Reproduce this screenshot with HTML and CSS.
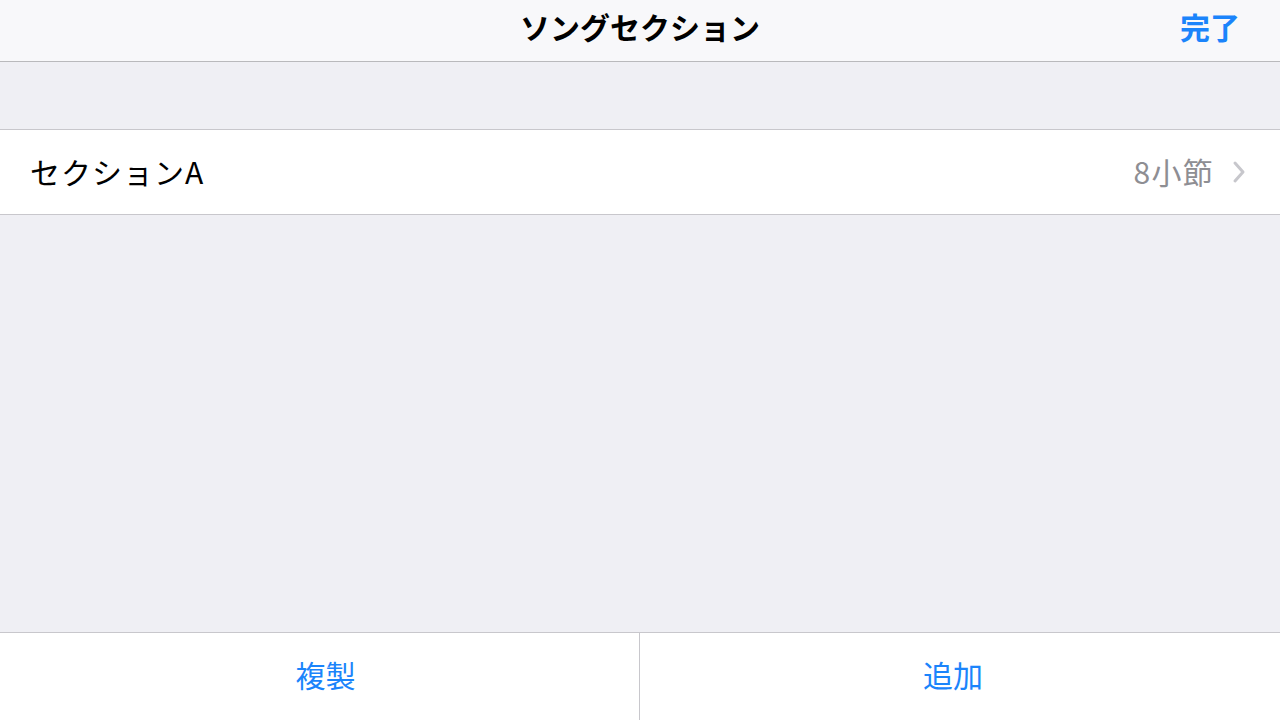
FILE: index.html
```html
<!DOCTYPE html>
<html lang="ja">
<head>
<meta charset="utf-8">
<title>ソングセクション</title>
<link rel="stylesheet" href="styles.css">
</head>
<body>
<div class="app">
  <header class="navbar">
    <div class="nav-side"></div>
    <h1 class="nav-title">ソングセクション</h1>
    <div class="nav-side nav-right"><button class="done">完了</button></div>
  </header>
  <main class="content">
    <div class="spacer"></div>
    <ul class="list">
      <li class="row">
        <span class="row-title">セクションA</span>
        <span class="row-detail">8小節</span>
        <svg class="chevron" width="14" height="24" viewBox="0 0 14 24"><path d="M3 3 L11 12 L3 21" fill="none" stroke="#c7c7cc" stroke-width="3" stroke-linecap="round" stroke-linejoin="round"/></svg>
      </li>
    </ul>
  </main>
  <footer class="toolbar">
    <button class="tool-btn tool-left">複製</button>
    <button class="tool-btn tool-right">追加</button>
  </footer>
</div>
</body>
</html>
```

FILE: styles.css
```css
* { box-sizing: border-box; }
html, body { margin: 0; padding: 0; }
body {
  width: 1280px;
  height: 720px;
  overflow: hidden;
  font-family: "Noto Sans CJK JP", "Noto Sans", sans-serif;
  background: #efeff4;
}
.app {
  display: flex;
  flex-direction: column;
  height: 720px;
}
.navbar {
  height: 62px;
  flex: none;
  background: #f8f8fa;
  border-bottom: 1px solid #b9b9bc;
  display: flex;
  align-items: center;
  padding: 0 40px 0 40px;
}
.nav-side { flex: 1; display: flex; }
.nav-right { justify-content: flex-end; }
.nav-title {
  margin: 0;
  font-size: 30px;
  font-weight: 700;
  color: #000;
  line-height: 1;
  padding-bottom: 10px;
}
.done {
  border: 0;
  background: none;
  padding: 0 0 10px 0;
  font-family: inherit;
  font-size: 30px;
  font-weight: 700;
  color: #1b84fb;
  line-height: 1;
}
.content {
  flex: 1;
  background: #efeff4;
}
.spacer { height: 67px; }
.list {
  list-style: none;
  margin: 0;
  padding: 0;
  background: #fff;
  border-top: 1px solid #c8c7cc;
  border-bottom: 1px solid #c8c7cc;
}
.row {
  height: 84px;
  display: flex;
  align-items: center;
  padding: 0 34px 0 30px;
}
.row-title {
  flex: 1;
  font-size: 30px;
  color: #000;
  line-height: 1;
  letter-spacing: 1px;
  padding-bottom: 2px;
}
.row-detail {
  font-size: 30px;
  color: #8e8e93;
  line-height: 1;
  letter-spacing: 1.3px;
  padding-bottom: 2px;
  margin-right: 18px;
}
.chevron { display: block; }
.toolbar {
  height: 88px;
  flex: none;
  background: #fff;
  border-top: 1px solid #c8c7cc;
  display: grid;
  grid-template-columns: 1fr 1fr;
}
.tool-btn {
  border: 0;
  background: #fff;
  font-family: inherit;
  font-size: 30px;
  color: #1b84fb;
  line-height: 1;
  padding-bottom: 6px;
}
.tool-left {
  padding-left: 12px;
  padding-right: 0;
  border-right: 1px solid #c8c7cc;
}
.tool-right {
  padding-left: 0;
  padding-right: 14px;
}
```
